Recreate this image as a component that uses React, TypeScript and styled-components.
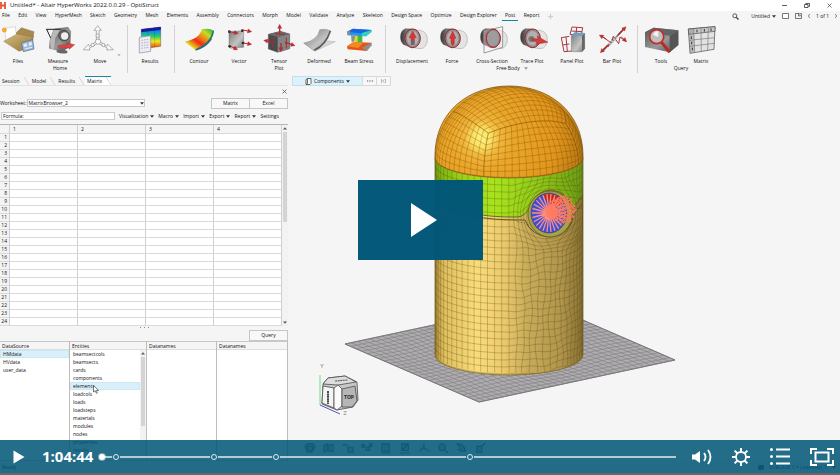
import React from "react";
import styled, { createGlobalStyle, css } from "styled-components";

const GlobalStyle = createGlobalStyle`
  *, *::before, *::after { box-sizing: border-box; }
  html, body { margin: 0; height: 100%; background: #666; }
  body { font-family: "Open Sans", "Noto Sans", sans-serif; font-size: 5px; line-height: 7px; color: #111; }
  button, input, select { font: inherit; color: inherit; margin: 0; padding: 0; border: 0; background: none; border-radius: 0; }
  button { cursor: pointer; }
  svg { display: block; flex: none; overflow: visible; }
`;

/* ---------- shell ---------- */

const Player = styled.main`
  position: relative;
  height: 100vh;
  overflow: hidden;
  display: flex;
  flex-direction: column;
  border-bottom: 2px solid #666;
  background: #f5f5f5;
`;

const TitleBar = styled.header`
  display: flex;
  align-items: center;
  height: 11px;
  flex: none;
  padding-right: 8px;
  background: #fff;
`;

const AppTitle = styled.h1`
  flex: 1;
  margin: 0 0 0 4px;
  font-size: 6px;
  font-weight: 400;
`;

const WindowButtons = styled.div`
  display: flex;
  gap: 17px;
`;

const IconButton = styled.button`
  display: grid;
  place-items: center;
  flex: none;
`;

const MenuBar = styled.nav`
  display: flex;
  align-items: center;
  justify-content: space-between;
  height: 10px;
  flex: none;
  padding: 0 3px 0 2px;
`;

const Menus = styled.div`
  display: flex;
  align-items: center;
  justify-content: space-between;
  width: 66%;
`;

const MenuItem = styled.button<{ $active?: boolean }>`
  flex: none;
  height: 10px;
  margin: 0 -3px;
  padding: 0 3px;
  line-height: 9px;
  white-space: nowrap;
  border-bottom: 1px solid ${(p) => (p.$active ? "#1683a3" : "transparent")};
`;

const MenuTools = styled.div`
  display: flex;
  align-items: center;
  gap: 6px;
`;

/* ---------- ribbon ---------- */

const Ribbon = styled.section`
  display: flex;
  height: 54px;
  flex: none;
  padding-top: 4px;
`;

const Group = styled.div`
  flex: none;
`;

const GroupItems = styled.div`
  display: flex;
`;

const GroupLabel = styled.div`
  display: flex;
  align-items: center;
  justify-content: center;
  gap: 4px;
`;

const Divider = styled.div<{ $before: number; $after: number }>`
  width: 1px;
  flex: none;
  height: 48px;
  margin: 0 ${(p) => p.$after}px 0 ${(p) => p.$before}px;
  background: #d2d2d2;
`;

const Tool = styled.button<{ $width?: number }>`
  display: flex;
  flex-direction: column;
  align-items: center;
  gap: 5px;
  width: ${(p) => p.$width ?? 40}px;
  line-height: 7px;
  text-align: center;
  white-space: pre;
`;

/* ---------- workspace ---------- */

const Workspace = styled.div`
  display: flex;
  flex: 1;
  min-height: 0;
`;

const SidePanel = styled.section`
  display: flex;
  flex-direction: column;
  width: 290px;
  flex: none;
  padding-right: 2px;
`;

const Tabs = styled.div`
  display: flex;
  height: 11px;
  flex: none;
  padding-top: 1px;
  border-bottom: 1px solid #e2e2e2;
`;

const Tab = styled.button<{ $active?: boolean }>`
  display: flex;
  align-items: center;
  gap: 4px;
  padding-left: 2px;
  border-top: 1px solid ${(p) => (p.$active ? "#1889ab" : "transparent")};
  background: ${(p) => (p.$active ? "#fff" : "transparent")};
  margin-right: ${(p) => (p.$active ? 0 : 1)}px;
`;

const CloseRow = styled.div`
  display: flex;
  justify-content: flex-end;
  height: 12px;
  flex: none;
  padding: 0 1px 2px;
`;

const Row = styled.div`
  display: flex;
  align-items: center;
  flex: none;
`;

const WorksheetRow = styled(Row)`
  height: 10px;
`;

const SelectBox = styled.div`
  display: flex;
  align-items: center;
  width: 118px;
  height: 8px;
  margin-left: 1px;
  border: 1px solid #c9c9c9;
  background: #fff;
`;

const Select = styled.select`
  appearance: none;
  flex: 1;
  height: 6px;
  line-height: 6px;
  outline: 0;
`;

const Spacer = styled.div`
  flex: 1;
`;

const PushButton = styled.button`
  width: 39px;
  height: 11px;
  margin-left: -1px;
  border: 1px solid #c6c6c6;
  background: #f8f8f8;
`;

const FormulaRow = styled(Row)`
  height: 16px;
  gap: 4px;
  padding: 0 9px 0 1px;
`;

const FormulaBox = styled.label`
  display: flex;
  align-items: center;
  width: 114px;
  height: 8px;
  padding-left: 1px;
  border: 1px solid #ccc;
  background: #fff;
  input { width: 80px; height: 6px; outline: 0; }
`;

const MenuRow = styled.div`
  display: flex;
  flex: 1;
  justify-content: space-between;
`;

const DropButton = styled.button`
  display: flex;
  align-items: center;
  gap: 2px;
`;

const SheetFrame = styled.div`
  display: flex;
  flex: none;
  border-top: 1px solid #b5b5b5;
`;

const Sheet = styled.table`
  flex: 1;
  table-layout: fixed;
  border-collapse: separate;
  border-spacing: 0;
  background: #fff;
  th, td {
    height: 8px;
    padding: 0;
    line-height: 7px;
    font-weight: 400;
    border-right: 1px solid #cfcfcf;
    border-bottom: 1px solid #dadada;
  }
  thead th { height: 9px; padding-left: 3px; text-align: left; background: #f4f4f4; }
  tbody th { text-align: right; padding-right: 2px; background: #f4f4f4; }
  thead th:first-child { width: 10px; }
`;

const Scroll = styled.div<{ $thumb: number }>`
  width: 6px;
  flex: none;
  padding: 2px 1px;
  display: flex;
  flex-direction: column;
  background: #f2f2f2;
  &::after {
    content: "";
    order: 1;
    height: ${(p) => p.$thumb}px;
    margin-top: 2px;
    background: #d4d4d4;
  }
  svg:last-child:not(:first-child) { order: 2; margin-top: auto; }
`;

const Splitter = styled.div`
  height: 4px;
  flex: none;
  display: flex;
  justify-content: center;
  gap: 3px;
  padding-top: 1px;
  i { width: 1px; height: 1px; background: #888; }
`;

const QueryRow = styled(Row)`
  height: 11px;
  justify-content: flex-end;
`;

const Lists = styled.div`
  flex: 1;
  min-height: 0;
  display: grid;
  grid-template-columns: 70px 77px 70px 71px;
  border-bottom: 1px solid #ccc;
`;

const ListPane = styled.div`
  display: flex;
  flex-direction: column;
  min-height: 0;
  overflow: hidden;
  border-right: 1px solid #bdbdbd;
  background: #fff;
`;

const ListTitle = styled.h2`
  flex: none;
  height: 9px;
  margin: 0;
  padding-left: 2px;
  font-size: 5px;
  font-weight: 400;
  line-height: 8px;
  background: #f5f5f5;
  border-top: 1px solid #c8c8c8;
  border-bottom: 1px solid #dedede;
`;

const ListBody = styled.div`
  display: flex;
  min-height: 0;
`;

const List = styled.ul`
  flex: 1;
  margin: 0;
  padding: 0;
  list-style: none;
`;

const Option = styled.button<{ $selected?: boolean }>`
  display: block;
  width: 100%;
  height: 8px;
  padding-left: 3px;
  line-height: 8px;
  text-align: left;
  ${(p) =>
    p.$selected &&
    css`
      background: #d9effa;
      box-shadow: inset 0 0 0 1px #cbe7f4;
    `}
`;

const OptionItem = styled.li`
  position: relative;
`;

const Pointer = styled.svg`
  position: absolute;
  left: 23px;
  top: 3px;
  z-index: 1;
`;

const StatusBar = styled.footer`
  display: flex;
  align-items: center;
  justify-content: space-between;
  flex: none;
  height: 12px;
  padding: 0 4px 0 2px;
  background: #f2f2f2;
`;

const StatusRight = styled.div`
  display: flex;
  align-items: center;
  gap: 5px;
`;

/* ---------- viewport ---------- */

const Viewport = styled.section`
  position: relative;
  flex: 1;
  display: flex;
  flex-direction: column;
  min-width: 0;
`;

const ViewTools = styled.div`
  display: flex;
  flex: none;
  height: 11px;
  padding: 1px 0 0 2px;
`;

const ViewButton = styled.button<{ $tone?: "blue" }>`
  display: flex;
  align-items: center;
  justify-content: center;
  gap: 2px;
  width: ${(p) => (p.$tone ? 71 : 15)}px;
  height: 10px;
  margin-right: -1px;
  border: 1px solid ${(p) => (p.$tone ? "#c3dfeb" : "#d9d9d9")};
  background: ${(p) => (p.$tone ? "#dcf1fb" : "#f7f7f7")};
`;

const Scene = styled.svg`
  flex: 1;
  width: 100%;
  min-height: 0;
`;

const ViewStrip = styled.div`
  position: absolute;
  left: 15px;
  bottom: 8px;
  display: flex;
  gap: 9px;
  opacity: 0.7;
`;

/* ---------- playback controls ---------- */

const BigPlay = styled.button`
  position: absolute;
  left: calc(50% - 62px);
  top: 180px;
  width: 125px;
  height: 80px;
  display: grid;
  place-items: center;
  padding-left: 6px;
  background: rgba(0, 86, 119, 0.98);
`;

const Controls = styled.div`
  position: absolute;
  left: 0;
  right: 0;
  bottom: 0;
  height: 33px;
  display: flex;
  align-items: center;
  padding: 0 6px 0 13px;
  color: #fff;
  background: rgba(0, 86, 119, 0.86);
`;

const Time = styled.time`
  width: 52px;
  margin: 0 8px 0 17px;
  font-size: 15px;
  line-height: 15px;
  font-weight: 700;
`;

const Track = styled.div`
  position: relative;
  flex: 1;
  height: 2px;
  margin-right: 16px;
  background: rgba(255, 255, 255, 0.65);
`;

const Marker = styled.button<{ $at: number; $current?: boolean }>`
  position: absolute;
  left: ${(p) => p.$at}%;
  top: 50%;
  width: 6px;
  height: 6px;
  transform: translate(-50%, -50%);
  border-radius: 50%;
  border: ${(p) => (p.$current ? "0" : "1px solid #dfecf0")};
  background: ${(p) => (p.$current ? "#fff" : "#236f8a")};
  box-shadow: 0 0 0 1px ${(p) => (p.$current ? "#fff6" : "#236f8a")};
`;

const ControlIcons = styled.div`
  display: flex;
  align-items: center;
  gap: 20px;
`;

/* ---------- small glyphs ---------- */

const Caret = ({ fill = "#333" }: { fill?: string }) => (
  <svg width="4" height="3" viewBox="0 0 4 3"><path d="M0 .3h4L2 2.8z" fill={fill} /></svg>
);
const Cross = () => (
  <svg width="5" height="5" viewBox="0 0 5 5"><path d="M.5.5l4 4m0-4l-4 4" stroke="#444" strokeWidth=".7" /></svg>
);
const ScrollArrow = ({ down }: { down?: boolean }) => (
  <svg width="4" height="3" viewBox="0 0 4 3"><path d={down ? "M0 .4h4L2 2.8z" : "M0 2.6h4L2 .2z"} fill="#555" /></svg>
);

/* ---------- ribbon drawings (96 x 84 grid) ---------- */

const Glyph = ({ children }: { children: React.ReactNode }) => (
  <svg width="32" height="28" viewBox="0 0 96 84">{children}</svg>
);

const GradientStore = styled.svg`
  width: 0;
  height: 0;
`;

const Gradients = () => (
  <GradientStore aria-hidden="true">
    <defs>
      <linearGradient id="steel" x1="0" y1="0" x2="1" y2="1"><stop offset="0" stopColor="#555" /><stop offset=".55" stopColor="#999" /><stop offset="1" stopColor="#4d4d4d" /></linearGradient>
      <linearGradient id="lightSteel" x1="0" y1="0" x2="1" y2="1"><stop offset="0" stopColor="#777" /><stop offset=".6" stopColor="#c4c4c4" /><stop offset="1" stopColor="#777" /></linearGradient>
      <linearGradient id="rainbowDown" x1="0" y1="0" x2="0" y2="1"><stop offset="0" stopColor="#1616c8" /><stop offset=".2" stopColor="#0a8fee" /><stop offset=".42" stopColor="#25cf62" /><stop offset=".65" stopColor="#f2e51c" /><stop offset="1" stopColor="#ea2a12" /></linearGradient>
      <linearGradient id="sheetHeat" x1="0" y1="1" x2="1" y2="0"><stop offset="0" stopColor="#18b53c" /><stop offset=".2" stopColor="#e5e01f" /><stop offset=".42" stopColor="#ef2d12" /><stop offset=".58" stopColor="#f0801a" /><stop offset=".76" stopColor="#c7dc20" /><stop offset="1" stopColor="#12a554" /></linearGradient>
      <linearGradient id="folder" x1="0" y1="0" x2="1" y2="1"><stop offset="0" stopColor="#d4bc7c" /><stop offset="1" stopColor="#94743a" /></linearGradient>
      <linearGradient id="cylShade"><stop offset="0" stopColor="#333" /><stop offset=".5" stopColor="#777" /><stop offset="1" stopColor="#555" /></linearGradient>
    </defs>
  </GradientStore>
);

const RedArrow = ({ x1, y1, x2, y2, w = 3 }: { x1: number; y1: number; x2: number; y2: number; w?: number }) => {
  const len = Math.hypot(x2 - x1, y2 - y1);
  const ux = (x2 - x1) / len;
  const uy = (y2 - y1) / len;
  const head = 12;
  const bx = x2 - ux * head;
  const by = y2 - uy * head;
  return (
    <g>
      <path d={`M${x1} ${y1}L${bx} ${by}`} stroke="#b3262c" strokeWidth={w} />
      <path d={`M${x2} ${y2}L${bx - uy * 6} ${by + ux * 6}L${bx + uy * 6} ${by - ux * 6}z`} fill="#d0262c" stroke="#8f1a1e" strokeWidth="1" />
    </g>
  );
};

const FilesIcon = () => (
  <Glyph>
    <path d="M42 24L58 8l38 12-4 28-36 2z" fill="#a98a4c" stroke="#6e5526" />
    <path d="M8 10l32-5 5 42-32 6z" fill="#fff" stroke="#999" />
    <path d="M5 49l40-22 50 8-22 36-22 8z" fill="url(#folder)" stroke="#7b6230" />
    <path d="M58 54l34-10 4 28-32 8z" fill="#9db8d8" stroke="#4d6c96" strokeWidth="2" />
    <path d="M64 58l10-3 2 9-10 2zM80 53l9-2 1 9-9 2z" fill="#e6eef7" />
    <path d="M68 72l22-5" stroke="#e6eef7" strokeWidth="3" />
    <circle cx="7" cy="15" r="6" fill="#f6b426" stroke="#e08b14" strokeWidth="2" />
  </Glyph>
);
const MeasureIcon = () => (
  <Glyph>
    <path d="M36 12l42-5 8 12-2 46-24 14-38-9 2-24z" fill="url(#steel)" stroke="#444" />
    <path d="M36 12l-12 34 2 24 10 3 4-34 16-28z" fill="#b9b9b9" />
    <circle cx="66" cy="32" r="16" fill="#666" stroke="#333" strokeWidth="2" />
    <circle cx="68" cy="33" r="11" fill="#eee" />
    <path d="M12 13h44M14 13l12 26" stroke="#222" strokeWidth="3" />
    <path d="M48 62l28-2-2-7 24 6-16 14-2-5-30 2z" fill="#dd4646" stroke="#a52222" />
    <path d="M44 76q14-8 32 2v6q-16 4-32-2z" fill="#666" />
  </Glyph>
);
const MoveIcon = () => (
  <Glyph>
    <g fill="#fafafa" stroke="#8b8b8b" strokeWidth="2">
      <path d="M37 44V16h-7L41 2l11 14h-7v28z" />
      <path d="M36 50L16 64l-3-6-15 16 20 1-2-6 22-12z" />
      <path d="M48 50l20 14 3-6 17 16-20 1 2-6-24-12z" />
      <circle cx="41" cy="32" r="5" /><circle cx="42" cy="50" r="8" />
      <circle cx="26" cy="60" r="5" /><circle cx="58" cy="60" r="5" />
    </g>
    <path d="M100 88h10l-5 6z" fill="#aaa" />
  </Glyph>
);
const ResultsIcon = () => (
  <Glyph>
    <path d="M22 13l58-7v58l-58 8z" fill="url(#rainbowDown)" stroke="#222" />
    <path d="M22 13l58-7v8l-58 8z" fill="#1b1b96" />
    <path d="M42 11v58M62 9v57" stroke="#0003" strokeWidth="2" />
    <path d="M16 37l34-5v47l-34 5z" fill="#ecebf2" stroke="#8c8a98" strokeWidth="2" />
    <path d="M22 46l22-3M22 54l22-3M22 62l22-3M22 70l22-3" stroke="#b7b4c8" strokeWidth="3" strokeDasharray="5 3" />
  </Glyph>
);
const ContourIcon = () => (
  <Glyph>
    <path d="M56 13Q50 42 5 50l33 26Q86 62 93 18 80 8 56 13z" fill="url(#sheetHeat)" />
    <path d="M38 76Q86 62 93 18l-3-2Q80 58 38 72z" fill="#157d6e" />
    <path d="M38 76Q72 66 86 42" stroke="#223fae" strokeWidth="2" fill="none" />
  </Glyph>
);
const VectorIcon = () => (
  <Glyph>
    <path d="M18 20l40-3 4 4v46l-40 3-4-4z" fill="url(#lightSteel)" stroke="#555" />
    <g fill="#222"><circle cx="19" cy="20" r="4" /><circle cx="58" cy="17" r="4" /><circle cx="20" cy="64" r="4" /><circle cx="60" cy="54" r="4" /></g>
    <RedArrow x1={19} y1={20} x2={46} y2={25} />
    <RedArrow x1={58} y1={15} x2={86} y2={20} />
    <RedArrow x1={20} y1={62} x2={44} y2={74} />
    <RedArrow x1={60} y1={54} x2={86} y2={58} />
  </Glyph>
);
const TensorIcon = () => (
  <Glyph>
    <path d="M16 28l36-9 28 8v44L44 82 16 72z" fill="#4b4b4b" stroke="#333" />
    <path d="M44 36l36-9v44L44 82z" fill="#858585" />
    <path d="M16 28l36-9 28 8-36 9z" fill="#6b6b6b" />
    <RedArrow x1={50} y1={28} x2={50} y2={-2} w={4} />
    <RedArrow x1={66} y1={52} x2={96} y2={62} w={4} />
    <RedArrow x1={32} y1={52} x2={2} y2={46} w={4} />
    <path d="M36 26l28 2M70 38v32M28 40v26" stroke="#b3262c" strokeWidth="3" />
    <RedArrow x1={54} y1={54} x2={54} y2={80} w={4} />
  </Glyph>
);
const DeformedIcon = () => (
  <Glyph>
    <path d="M56 46l41 4-60 28-32-22z" fill="#d6d6d6" stroke="#999" strokeWidth="1" />
    <path d="M50 14Q44 46 2 54l32 24Q70 62 84 18 70 10 50 14z" fill="url(#lightSteel)" stroke="#666" />
    <path d="M34 78Q70 62 84 18l-4-1Q66 58 34 73z" fill="#555" />
  </Glyph>
);
const BeamIcon = () => (
  <Glyph>
    <path d="M32 28h26l-4 28H36z" fill="#ddd72a" />
    <path d="M44 28h14v30H44z" fill="#39bb48" />
    <path d="M12 20l18-9 56 4-16 12v7l-56-3z" fill="#2397e8" />
    <path d="M12 20l18-9 56 4-16 12z" fill="#1b63df" />
    <path d="M12 20l10-5-2 15-6 1z" fill="#8d8d8d" />
    <path d="M56 24l30-9v6L70 34l-14-1z" fill="#33cfc0" />
    <path d="M12 64l20-13 54 2-14 20v5l-58-5z" fill="#e4531b" />
    <path d="M12 64l20-13 30 1-16 17z" fill="#f08b20" />
    <path d="M56 68l30-15v8L72 78z" fill="#8d8d8d" />
    <path d="M24 31l12 2-2 16-8 3z" fill="#8d8d8d" />
  </Glyph>
);
const Cylinder = () => (
  <>
    <path d="M52 13l22 4a20 27 0 010 54l-22-3z" fill="#e4e4e4" stroke="#aaa" strokeWidth="2" />
    <path d="M50 12L28 11a20 26 0 000 50l22 8z" fill="url(#cylShade)" stroke="#444" />
    <ellipse cx="50" cy="40" rx="23" ry="28" fill="#8d8d8d" stroke="#a3202b" strokeWidth="3" />
    <ellipse cx="50" cy="40" rx="17" ry="22" fill="#b0b0b0" />
  </>
);
const DisplacementIcon = () => (
  <Glyph><Cylinder /><path d="M50 18l11 20h-6v20H45V38h-6z" fill="#d33" stroke="#8d2020" /><path d="M45 46h10v13H45z" fill="#666" /></Glyph>
);
const ForceIcon = () => (
  <Glyph><Cylinder /><path d="M50 18l10 22h-5v16l-5 6-5-6V40h-5z" fill="#d33" stroke="#8d2020" /></Glyph>
);
const SectionIcon = () => (
  <Glyph><Cylinder /><path d="M24 18l56-13v62L24 84z" fill="#fff4" stroke="#999" strokeWidth="3" /><ellipse cx="52" cy="40" rx="21" ry="27" fill="#888a" stroke="#a3202b" strokeWidth="3" /></Glyph>
);
const TraceIcon = () => (
  <Glyph><Cylinder /><circle cx="46" cy="42" r="9" fill="#777" /><path d="M46 40l20 2-3-9 33 19-36 6 3-7-14-3z" fill="#d43a3a" stroke="#8d2020" /></Glyph>
);
const PanelIcon = () => (
  <Glyph>
    <path d="M48 6l32 2-4 22-34-2zM62 7l-2 22M46 18l32 2M16 38l24-4M16 38l8 42 24-2M20 60l20-3M30 36l4 44" fill="none" stroke="#a93a40" strokeWidth="3" />
    <path d="M46 32l10-9 30 2v46l-8 9H46z" fill="url(#lightSteel)" stroke="#555" />
    <path d="M46 32l10-9 30 2-8 8z" fill="#6ba1c7" /><path d="M78 33l8-8v46l-8 9z" fill="#666" />
  </Glyph>
);
const BarIcon = () => (
  <Glyph>
    <path d="M18 80L84 12" stroke="#777" strokeWidth="5" />
    <path d="M18 34l28 20 6-20 16 22 4-20 18 14M36 66l16-30" fill="none" stroke="#a9343a" strokeWidth="3" />
    <path d="M40 58l22-22" stroke="#bbb" strokeWidth="9" strokeDasharray="6 3" />
    <RedArrow x1={66} y1={30} x2={90} y2={5} w={4} /><RedArrow x1={36} y1={60} x2={13} y2={83} w={4} />
    <RedArrow x1={30} y1={42} x2={10} y2={30} /><RedArrow x1={76} y1={36} x2={92} y2={50} />
  </Glyph>
);
const ToolsIcon = () => (
  <Glyph>
    <path d="M0 22L26 8l74 8v44L74 82 0 66z" fill="url(#steel)" />
    <path d="M0 22L26 8l74 8-26 16z" fill="#636363" /><path d="M74 32l26-16v44L74 82z" fill="#555" />
    <circle cx="35" cy="35" r="21" fill="#bfbfbf" stroke="#c02f2c" strokeWidth="5" />
    <path d="M24 30q4-12 16-12v18z" fill="#fffc" />
    <path d="M50 52l24 30" stroke="#b92a26" strokeWidth="9" />
  </Glyph>
);
const MatrixIcon = () => (
  <Glyph>
    <path d="M10 12l80-7-3 68-72 12z" fill="#e2e2e2" stroke="#444" strokeWidth="2" />
    <path d="M10 12l80-7v14l-79 9z" fill="#c9c9c9" stroke="#444" strokeWidth="2" />
    <path d="M26 11l3 72M48 9l1 70M70 7l-2 70M12 46l77-8M13 64l75-9" stroke="#777" strokeWidth="2" />
    <path d="M10 12l16-2 3 73-14 2z" fill="#7775" />
    <path d="M36 14v8M58 12v8M78 10v8M19 34v8M20 50v8M22 68v8" stroke="#333" strokeWidth="3" />
  </Glyph>
);

/* ---------- finite-element model ---------- */

const CX = 509;
const R = 74;
const TILT = 0.274;
const DOME_Y = 158;
const D = Math.PI / 180;

type P3 = [number, number, number];
type Pt = readonly [number, number] | null;

const toPath = (pts: Pt[]) => {
  let d = "";
  let pen = false;
  for (const p of pts) {
    if (!p) {
      pen = false;
      continue;
    }
    d += `${pen ? "L" : "M"}${p[0].toFixed(1)} ${p[1].toFixed(1)}`;
    pen = true;
  }
  return d;
};

const projectDome = ([x, y, z]: P3): Pt => {
  const n = Math.hypot(x, y, z);
  const az = 25 * D;
  const X = (x * Math.cos(az) + z * Math.sin(az)) / n;
  const Z = (-x * Math.sin(az) + z * Math.cos(az)) / n;
  const Y = y / n;
  const up = Y * Math.cos(TILT) - Z * Math.sin(TILT);
  const depth = Y * Math.sin(TILT) + Z * Math.cos(TILT);
  return depth < 0 ? null : [CX + R * X, DOME_Y - R * up * 0.965];
};

/* The dome is meshed as a cubed sphere: one cap patch and four side patches. */
const domeMesh = () => {
  let d = "";
  const N = 16;
  const t = (i: number) => Math.tan((-45 + (90 * i) / N) * D);
  const faces: ((a: number, b: number) => P3)[] = [
    (a, b) => [a, b, 1],
    (a, b) => [1, b, a],
    (a, b) => [a, b, -1],
    (a, b) => [-1, b, a],
  ];
  for (let i = 0; i <= N; i++) {
    const capA: Pt[] = [];
    const capB: Pt[] = [];
    for (let j = 0; j <= N; j++) {
      capA.push(projectDome([t(i), 1, t(j)]));
      capB.push(projectDome([t(j), 1, t(i)]));
    }
    d += toPath(capA) + toPath(capB);
    for (const f of faces) {
      const v: Pt[] = [];
      const h: Pt[] = [];
      for (let j = 0; j <= N; j++) {
        if (j >= N / 2) v.push(projectDome(f(t(i), t(j))));
        if (i >= N / 2) h.push(projectDome(f(t(j), t(i))));
      }
      d += toPath(v) + toPath(h);
    }
  }
  return d;
};

const HX = 550;
const HY = 214;

/* Distorts the regular wall grid on the far side and pushes it away from the nozzle. */
const bend = (x: number, y: number): [number, number] => {
  const k = Math.max(0, Math.min(1, (x - 505) / 20)) * Math.max(0, Math.min(1, (583 - x) / 14));
  let nx = x + k * (1.3 * Math.sin(y / 17 + x / 9) + 0.8 * Math.sin(y / 7 - x / 5));
  let ny = y + k * (1.2 * Math.sin(x / 8 + y / 23) + 0.9 * Math.cos(x / 4 + y / 11));
  const dx = nx - HX;
  const dy = ny - HY;
  const r = Math.hypot(dx, dy) || 1;
  if (r < 40) {
    const nr = 20 + r * 0.5;
    nx = Math.min(583, HX + (dx / r) * nr);
    ny = HY + (dy / r) * nr;
  }
  return [nx, ny];
};

const wallMesh = () => {
  let d = "";
  for (let a = -90; a <= 90; a += 5.625) {
    const x = CX + R * Math.sin(a * D);
    const base = 20 * Math.cos(a * D);
    const pts: Pt[] = [];
    for (let y = DOME_Y + base; y <= 355 + base; y += 3) pts.push(bend(x, y));
    d += toPath(pts);
  }
  for (let y = DOME_Y + 7; y < 355; y += 7) {
    const pts: Pt[] = [];
    for (let a = -90; a <= 90; a += 3) pts.push(bend(CX + R * Math.sin(a * D), y + 20 * Math.cos(a * D)));
    d += toPath(pts);
  }
  return d;
};

const planeMesh = () => {
  let d = "";
  const at = (u: number, v: number): [number, number] => {
    const w = 0.022 * Math.sin(Math.PI * u) * Math.sin(Math.PI * v);
    const uu = u + w * Math.sin(v * 11 + u * 4);
    const vv = v + w * 1.6 * Math.sin(u * 10 + v * 3);
    return [345 + 196 * uu + 134 * vv, 344 - 42 * uu + 58 * vv];
  };
  for (let i = 0; i <= 32; i++) d += toPath(Array.from({ length: 31 }, (_, j) => at(i / 32, j / 30)));
  for (let i = 0; i <= 24; i++) d += toPath(Array.from({ length: 31 }, (_, j) => at(j / 30, i / 24)));
  return d;
};

const spokes = (n: number, rx: number, ry: number, cx: number, cy: number) => {
  let d = "";
  for (let i = 0; i < n; i++) {
    const a = (i * 2 * Math.PI) / n;
    d += `M${cx} ${cy}L${(cx + rx * Math.cos(a)).toFixed(1)} ${(cy + ry * Math.sin(a)).toFixed(1)}`;
  }
  return d;
};

const loadArrows = () => {
  let d = "";
  for (let i = 0; i < 60; i++) {
    const a = i * 2.4;
    const r = 13 * Math.sqrt(i / 60);
    const x = 562 + r * Math.cos(a);
    const y = 210 + r * 1.05 * Math.sin(a);
    d += `M${(x - 3).toFixed(1)} ${(y + 1).toFixed(1)}l5-2m-2-1l2 1l-1 2`;
  }
  return d;
};

const Model = () => (
  <Scene viewBox="290 86 550 375" preserveAspectRatio="xMidYMin meet" role="img" aria-label="Meshed pressure vessel">
    <defs>
      <radialGradient id="dome" gradientUnits="userSpaceOnUse" cx="482" cy="138" r="104">
        <stop offset="0" stopColor="#fff37c" /><stop offset=".08" stopColor="#fce468" /><stop offset=".18" stopColor="#f1b53a" /><stop offset=".3" stopColor="#eba72a" /><stop offset=".7" stopColor="#e3961c" /><stop offset="1" stopColor="#b97712" />
      </radialGradient>
      <linearGradient id="green"><stop offset="0" stopColor="#74ab10" /><stop offset=".16" stopColor="#98cf16" /><stop offset=".4" stopColor="#a8e41c" /><stop offset=".7" stopColor="#8fc918" /><stop offset="1" stopColor="#6b9c14" /></linearGradient>
      <linearGradient id="sand"><stop offset="0" stopColor="#b08d3b" /><stop offset=".06" stopColor="#dfbe5c" /><stop offset=".28" stopColor="#fadc7b" /><stop offset=".46" stopColor="#ecca6c" /><stop offset=".62" stopColor="#c9ac5a" /><stop offset=".85" stopColor="#b0954b" /><stop offset="1" stopColor="#8a7234" /></linearGradient>
      <clipPath id="wallClip"><path d="M435 158A74 20 0 00583 158V355A74 20 0 01435 355z" /></clipPath>
    </defs>
    <path d="M345 344L541 302L675 360L479 402z" fill="#aeacae" stroke="#737173" strokeWidth="1" />
    <path d={planeMesh()} fill="none" stroke="#7f7d80" strokeWidth=".6" />
    <path d="M435 158A74 20 0 00583 158V355A74 20 0 01435 355z" fill="url(#sand)" />
    <path d="M435 158A74 20 0 00583 158V195Q575 204 573 210Q568 192 552 190Q536 190 530 206Q526 216 518 217Q460 218 435 197z" fill="url(#green)" />
    <g clipPath="url(#wallClip)">
      <path d={wallMesh()} fill="none" stroke="#4f4411" strokeOpacity=".45" strokeWidth=".6" />
      <path d="M435 197Q460 218 518 217Q526 216 530 206Q536 190 552 190Q568 192 573 210Q575 204 583 195" fill="none" stroke="#54501a" strokeWidth=".8" />
      <path d="M435 200Q460 221 525 220Q531 236 550 237Q570 236 574 214L583 203" fill="none" stroke="#54501a" strokeWidth=".9" />
    </g>
    <path d="M435 158V355A74 20 0 00583 355V158" fill="none" stroke="#7a662b" strokeWidth=".8" />
    <ellipse cx="550" cy="214" rx="22" ry="23" fill="#a7a148" stroke="#635b22" strokeWidth=".8" />
    <ellipse cx="549" cy="213" rx="18" ry="20" fill="#3b50d8" stroke="#403a5e" strokeWidth=".6" />
    <path d="M543 195Q552 191 563 200L560 206L549 204z" fill="#c52818" />
    <path d={spokes(26, 17, 19, 549, 213)} stroke="#ff8d86" strokeWidth="1.3" />
    <ellipse cx="551" cy="212" rx="6" ry="7" fill="#ff8066" />
    <path d={loadArrows()} fill="none" stroke="#ff795c" strokeWidth="1" />
    <path d="M435 158C434 110 471 86 509 86C547 86 584 110 583 158A74 20 0 01435 158z" fill="url(#dome)" stroke="#7d5a18" strokeWidth=".8" />
    <path d={domeMesh()} fill="none" stroke="#6b4505" strokeOpacity=".5" strokeWidth=".6" />

    <path d="M320 375V405" stroke="#73dc7c" strokeWidth="1" />
    <path d="M320 405L340 414" stroke="#5252c8" strokeWidth="1" />
    <g stroke="#4c4c4c" strokeWidth=".8" strokeLinejoin="round">
      <path d="M323 384L328 378L345 376L357 382L358 400L353 407L337 410L322 404z" fill="#c8c8c8" />
      <path d="M328 378L345 376L356 382L338 385L323 384z" fill="#dedede" />
      <path d="M323 386L334 388V408L322 403z" fill="#f4f4f4" />
      <path d="M334 388L338 385L342 389V406L337 410L334 408z" fill="#fafafa" />
      <path d="M342 389L355 386L357 401L352 407L342 407z" fill="#b6b6b6" />
    </g>
    <text x="349" y="399" fontSize="5" fontWeight="700" textAnchor="middle" fill="#222">TOP</text>
    <path d="M328 391v13" stroke="#222" strokeWidth="1.6" strokeDasharray="2 .4" />
    <path d="M335 381l13-1" stroke="#666" strokeWidth="1.2" strokeDasharray="2 .6" />
    <text x="322" y="368" fontSize="6" textAnchor="middle" fill="#777">Y</text>
    <text x="345" y="415" fontSize="6" textAnchor="middle" fill="#777">Z</text>
  </Scene>
);

/* ---------- data ---------- */

const menus = ["File", "Edit", "View", "HyperMesh", "Sketch", "Geometry", "Mesh", "Elements", "Assembly", "Connectors", "Morph", "Model", "Validate", "Analyze", "Skeleton", "Design Space", "Optimize", "Design Explorer", "Post", "Report"];
const sheetMenus = ["Visualization", "Macro", "Import", "Export", "Report"];
const sources = ["HMdata", "HVdata", "user_data"];
const entities = ["beamsectcols", "beamsects", "cards", "components", "elements", "loadcols", "loads", "loadsteps", "materials", "modules", "nodes", "properties", "results"];
const panelTabs = ["Session", "Model", "Results", "Matrix"];
const chapters = [0, 2.4, 19.5, 30.3, 64.1];

const viewIcons = [
  "M0 4l3-3h7l2 4-4 6H3z M3 4h6v5H3z",
  "M0 3l4-2v8l-4 2zM6 2h5v8H6z",
  "M0 3q3-3 6 1M6 5h6v6H6z",
  "M0 2h3v3H0zM5 5h4v4H5zM9 1h3v3H9z",
  "M1 1v9h9V1zM1 12h10",
  "M2 1h8v8H2zM2 9l8-8M0 12h12",
  "M6 0v6L0 10M6 6l6 4",
  "M1 5a4 4 0 108 0 4 4 0 00-8 0M8 8l4 4",
  "M0 1q9 0 10 9H4V6zM0 8h5",
  "M1 4h6v7H1zM6 5l5-5",
];

/* ---------- page ---------- */

export default function App() {
  return (
    <Player>
      <GlobalStyle />
      <TitleBar>
        <svg width="6" height="7" viewBox="0 0 6 7"><path d="M1 0v7M5 0v7M1 3.5h4" stroke="#e8552f" strokeWidth="1.8" /></svg>
        <AppTitle>Untitled* - Altair HyperWorks 2022.0.0.29 - OptiStruct</AppTitle>
        <WindowButtons>
          <IconButton aria-label="Minimize"><svg width="5" height="5" viewBox="0 0 5 5"><path d="M0 2.5h5" stroke="#333" strokeWidth=".8" /></svg></IconButton>
          <IconButton aria-label="Restore"><svg width="6" height="5" viewBox="0 0 6 5"><path d="M.5 1.5H4v3H.5zM1.8 1.3V.4h3.7v3H4.2" fill="none" stroke="#333" strokeWidth=".8" /></svg></IconButton>
          <IconButton aria-label="Close"><Cross /></IconButton>
        </WindowButtons>
      </TitleBar>
      <MenuBar>
        <Menus>
          {menus.map((m) => <MenuItem key={m} $active={m === "Post"}>{m}</MenuItem>)}
          <svg width="5" height="5" viewBox="0 0 5 5"><path d="M2.5 0v5M0 2.5h5" stroke="#ccc" strokeWidth="1.2" /></svg>
        </Menus>
        <MenuTools>
          <IconButton aria-label="Search"><svg width="7" height="7" viewBox="0 0 7 7"><circle cx="2.8" cy="2.8" r="2" fill="none" stroke="#333" strokeWidth=".8" /><path d="M4.3 4.3L6.5 6.5" stroke="#333" strokeWidth="1.2" /></svg></IconButton>
          <Spacer />
          <DropButton>Untitled<Caret /></DropButton>
          <IconButton aria-label="Page layout"><svg width="7" height="6" viewBox="0 0 7 6"><path d="M.5.5h6v5h-6z" fill="#fff" stroke="#555" strokeWidth=".8" /></svg></IconButton>
          <IconButton aria-label="Detach page"><svg width="7" height="6" viewBox="0 0 7 6"><path d="M4 .5H.5v5h6V3M3.5 3V1l3-.5v2z" fill="none" stroke="#555" strokeWidth=".8" /></svg></IconButton>
          <IconButton aria-label="Previous page"><svg width="2" height="4" viewBox="0 0 2 4"><path d="M1.8 0L.3 2l1.5 2" fill="none" stroke="#555" strokeWidth=".7" /></svg></IconButton>
          <span>1 of 1</span>
          <IconButton aria-label="Next page"><svg width="2" height="4" viewBox="0 0 2 4"><path d="M.2 0l1.5 2L.2 4" fill="none" stroke="#555" strokeWidth=".7" /></svg></IconButton>
        </MenuTools>
      </MenuBar>

      <Ribbon aria-label="Post tools">
        <Gradients />
        <Group>
          <GroupItems>
            <Tool $width={36}><FilesIcon />Files</Tool>
            <Tool $width={44}><MeasureIcon />Measure</Tool>
            <Tool><MoveIcon />Move</Tool>
          </GroupItems>
          <GroupLabel>Home</GroupLabel>
        </Group>
        <Divider $before={7} $after={2} />
        <Group><Tool><ResultsIcon />Results</Tool></Group>
        <Divider $before={4} $after={4} />
        <Group>
          <GroupItems>
            <Tool><ContourIcon />Contour</Tool>
            <Tool><VectorIcon />Vector</Tool>
            <Tool><TensorIcon />{"Tensor\nPlot"}</Tool>
            <Tool><DeformedIcon />Deformed</Tool>
            <Tool><BeamIcon />Beam Stress</Tool>
          </GroupItems>
        </Group>
        <Divider $before={6} $after={6} />
        <Group>
          <GroupItems>
            <Tool><DisplacementIcon />Displacement</Tool>
            <Tool><ForceIcon />Force</Tool>
            <Tool><SectionIcon />Cross-Section</Tool>
            <Tool><TraceIcon />Trace Plot</Tool>
            <Tool><PanelIcon />Panel Plot</Tool>
            <Tool><BarIcon />Bar Plot</Tool>
          </GroupItems>
          <GroupLabel>Free Body<Caret fill="#999" /></GroupLabel>
        </Group>
        <Divider $before={5} $after={3} />
        <Group>
          <GroupItems>
            <Tool><ToolsIcon />Tools</Tool>
            <Tool><MatrixIcon />Matrix</Tool>
          </GroupItems>
          <GroupLabel>Query</GroupLabel>
        </Group>
      </Ribbon>

      <Workspace>
        <SidePanel>
          <Tabs>
            {panelTabs.map((t) => (
              <Tab key={t} $active={t === "Matrix"}>
                {t}
                <svg width="5" height="8" viewBox="0 0 5 8"><path d="M0 0l5 8" stroke="#ccc" strokeWidth=".8" /></svg>
              </Tab>
            ))}
          </Tabs>
          <CloseRow><IconButton aria-label="Close panel"><Cross /></IconButton></CloseRow>
          <WorksheetRow>
            <label htmlFor="worksheet">Worksheet:</label>
            <SelectBox>
              <Select id="worksheet" defaultValue="MatrixBrowser_2"><option>MatrixBrowser_2</option></Select>
              <Caret />
            </SelectBox>
            <Spacer />
            <PushButton>Matrix</PushButton>
            <PushButton>Excel</PushButton>
          </WorksheetRow>
          <FormulaRow>
            <FormulaBox>Formula:<input type="text" /></FormulaBox>
            <MenuRow>
              {sheetMenus.map((m) => <DropButton key={m}>{m}<Caret /></DropButton>)}
              <DropButton>Settings</DropButton>
            </MenuRow>
          </FormulaRow>
          <SheetFrame>
            <Sheet>
              <thead><tr><th />{[1, 2, 3, 4].map((c) => <th key={c} scope="col">{c}</th>)}</tr></thead>
              <tbody>
                {Array.from({ length: 24 }, (_, r) => (
                  <tr key={r}><th scope="row">{r + 1}</th><td /><td /><td /><td /></tr>
                ))}
              </tbody>
            </Sheet>
            <Scroll $thumb={90}><ScrollArrow /><ScrollArrow down /></Scroll>
          </SheetFrame>
          <Splitter><i /><i /><i /></Splitter>
          <QueryRow><PushButton>Query</PushButton></QueryRow>
          <Lists>
            <ListPane>
              <ListTitle>DataSource</ListTitle>
              <List>{sources.map((s) => <OptionItem key={s}><Option $selected={s === "HMdata"}>{s}</Option></OptionItem>)}</List>
            </ListPane>
            <ListPane>
              <ListTitle>Entities</ListTitle>
              <ListBody>
                <List>
                  {entities.map((e) => (
                    <OptionItem key={e}>
                      <Option $selected={e === "elements"}>{e}</Option>
                      {e === "elements" && (
                        <Pointer width="7" height="9" viewBox="0 0 7 9"><path d="M.5.5V7l1.7-1.3 1.2 2.6 1-.5-1.1-2.4h2.3z" fill="#fff" stroke="#444" strokeWidth=".7" /></Pointer>
                      )}
                    </OptionItem>
                  ))}
                </List>
                <Scroll $thumb={69}><ScrollArrow /></Scroll>
              </ListBody>
            </ListPane>
            <ListPane><ListTitle>Datanames</ListTitle></ListPane>
            <ListPane><ListTitle>Datanames</ListTitle></ListPane>
          </Lists>
        </SidePanel>

        <Viewport>
          <ViewTools>
            <ViewButton $tone="blue">
              <svg width="7" height="7" viewBox="0 0 7 7"><path d="M1 1.5L2.5.5H6v5l-1 1H1zM2.5.5v5L1 6.5" fill="#fff" stroke="#444" strokeWidth=".8" /></svg>
              Components
              <Caret />
            </ViewButton>
            <ViewButton aria-label="More"><svg width="6" height="2" viewBox="0 0 6 2"><path d="M0 1h6" stroke="#555" strokeWidth="1.2" strokeDasharray="1.2 1.2" /></svg></ViewButton>
            <ViewButton aria-label="Collapse"><svg width="5" height="4" viewBox="0 0 5 4"><path d="M.5 0v4M4.5 0v4M3.5.5L1.5 2l2 1.5" fill="none" stroke="#aaa" strokeWidth=".8" /></svg></ViewButton>
          </ViewTools>
          <Model />
          <ViewStrip>
            {viewIcons.map((d) => <svg key={d} width="10" height="10" viewBox="0 0 12 12"><path d={d} fill="#7778" stroke="#333" strokeWidth="1.3" /></svg>)}
          </ViewStrip>
        </Viewport>
      </Workspace>
      <StatusBar>
        <span>Ready</span>
        <StatusRight>
          <svg width="6" height="5" viewBox="0 0 6 5"><path d="M0 1l2-1h4v4l-2 1H0z" fill="#555" /></svg>
          <span>SUBCASE 1 = LoadStep_1</span>
          <Caret />
        </StatusRight>
      </StatusBar>

      <BigPlay aria-label="Play video"><svg width="26" height="34" viewBox="0 0 26 34"><path d="M0 0l26 17L0 34z" fill="#fff" /></svg></BigPlay>

      <Controls>
        <IconButton aria-label="Play"><svg width="12" height="14" viewBox="0 0 12 14"><path d="M.5.5l11 6.5-11 6.5z" fill="#fff" /></svg></IconButton>
        <Time>1:04:44</Time>
        <Track>
          {chapters.map((c, i) => <Marker key={c} $at={c} $current={i === 0} aria-label={`Chapter ${i + 1}`} />)}
        </Track>
        <ControlIcons>
          <IconButton aria-label="Volume">
            <svg width="20" height="16" viewBox="0 0 20 16"><path d="M0 5.5h3L8 2v12l-5-3.5H0z" fill="#fff" /><path d="M12 4q3 4 0 8M16 1q5 7 0 14" fill="none" stroke="#fff" strokeWidth="1.8" /></svg>
          </IconButton>
          <IconButton aria-label="Settings">
            <svg width="18" height="18" viewBox="0 0 18 18"><g fill="none" stroke="#fff"><circle cx="9" cy="9" r="5" strokeWidth="1.8" /><path d="M9 0v4M9 14v4M0 9h4M14 9h4M2.6 2.6l2.9 2.9M12.5 12.5l2.9 2.9M2.6 15.4l2.9-2.9M12.5 5.5l2.9-2.9" strokeWidth="2" /></g></svg>
          </IconButton>
          <IconButton aria-label="Chapters">
            <svg width="20" height="17" viewBox="0 0 20 17"><g fill="#fff"><circle cx="1.5" cy="1.5" r="1.5" /><circle cx="1.5" cy="8.5" r="1.5" /><circle cx="1.5" cy="15.5" r="1.5" /><path d="M6 .5h14v2H6zM6 7.5h14v2H6zM6 14.5h14v2H6z" /></g></svg>
          </IconButton>
          <IconButton aria-label="Fullscreen">
            <svg width="24" height="18" viewBox="0 0 24 18"><path d="M1 6V1h6M17 1h6v5M23 12v5h-6M7 17H1v-5M5.5 4.5h13v9h-13z" fill="none" stroke="#fff" strokeWidth="2" /></svg>
          </IconButton>
        </ControlIcons>
      </Controls>
    </Player>
  );
}
